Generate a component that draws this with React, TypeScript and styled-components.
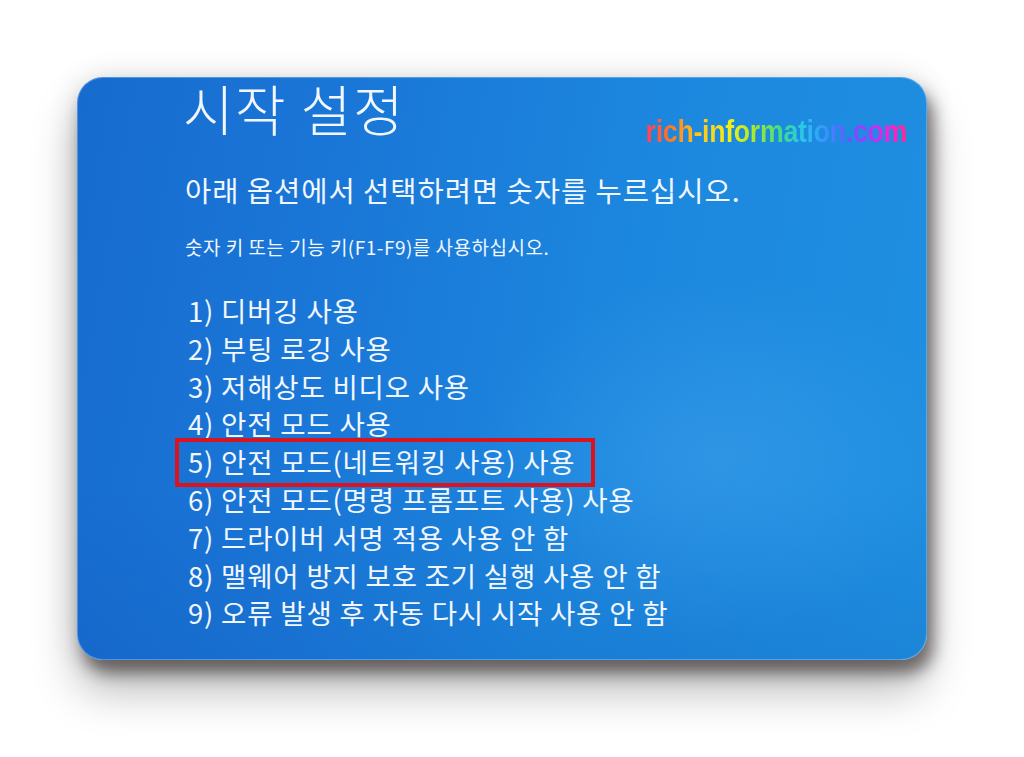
import React from "react";
import styled, { createGlobalStyle } from "styled-components";

const GlobalStyle = createGlobalStyle`
  html, body {
    margin: 0;
    padding: 0;
    background: #ffffff;
  }
  body {
    font-family: "Noto Sans CJK KR", "Noto Sans", sans-serif;
  }
`;

const Page = styled.div`
  width: 1024px;
  height: 757px;
  padding: 77px 0 0 77px;
  box-sizing: border-box;
  background: #ffffff;
  overflow: hidden;
`;

const Screen = styled.div`
  width: 850px;
  height: 583px;
  box-sizing: border-box;
  padding: 0 20px 0 106px;
  border-radius: 26px;
  color: #f2f7ff;
  background:
    radial-gradient(ellipse 340px 260px at 640px 380px, rgba(80, 170, 240, 0.35), rgba(80, 170, 240, 0) 70%),
    linear-gradient(180deg, rgba(0, 0, 0, 0) 70%, rgba(0, 40, 140, 0.1) 100%),
    linear-gradient(100deg, #176bcf 0%, #1a77d7 30%, #1c87de 62%, #1f90e1 100%);
  box-shadow:
    inset 0 0 0 1px rgba(150, 200, 255, 0.45),
    6px 13px 15px rgba(40, 30, 30, 0.55),
    0 30px 45px rgba(0, 0, 0, 0.28),
    0 0 30px rgba(0, 0, 0, 0.12);
`;

const Header = styled.div`
  display: flex;
  justify-content: space-between;
  align-items: flex-start;
`;

const Title = styled.h1`
  margin: 0;
  font-size: 55px;
  line-height: 60px;
  font-weight: 300;
  letter-spacing: 1.5px;
`;

const Watermark = styled.div`
  margin-top: 40px;
  font-family: "Liberation Sans", Arial, sans-serif;
  font-weight: 700;
  font-size: 31px;
  line-height: 30px;
  letter-spacing: -0.3px;
  transform: scaleX(0.86);
  transform-origin: right center;
  background: linear-gradient(
    90deg,
    #ff3d5a 0%,
    #ff7a22 10%,
    #ffc61a 20%,
    #f2ee1a 32%,
    #a6e82c 42%,
    #3ddc8a 52%,
    #2ac8e8 60%,
    #3a8cff 70%,
    #6a54ff 78%,
    #b233ff 86%,
    #ff20d0 94%,
    #ff2a8a 100%
  );
  -webkit-background-clip: text;
  background-clip: text;
  color: transparent;
`;

const Subtitle = styled.p`
  margin: 25px 0 0 2px;
  font-size: 28.5px;
  line-height: 36px;
  font-weight: 400;
  letter-spacing: 1px;
`;

const Hint = styled.p`
  margin: 26px 0 0 2px;
  font-size: 19px;
  line-height: 26px;
  font-weight: 400;
  letter-spacing: 0.5px;
`;

const Options = styled.ol`
  list-style: none;
  margin: 32px 0 0 5px;
  padding: 0;
  display: flex;
  flex-direction: column;
  align-items: flex-start;
`;

const Option = styled.li<{ $selected?: boolean }>`
  position: relative;
  font-size: 27.5px;
  line-height: 37.8px;
  font-weight: 400;
  letter-spacing: 0.8px;
  white-space: nowrap;

  ${(p) =>
    p.$selected
      ? `
    &::after {
      content: "";
      position: absolute;
      left: -13px;
      right: -20px;
      top: -5px;
      bottom: -6px;
      border: 4px solid #d9141f;
      pointer-events: none;
    }
  `
      : ""}
`;

const items = [
  "1) 디버깅 사용",
  "2) 부팅 로깅 사용",
  "3) 저해상도 비디오 사용",
  "4) 안전 모드 사용",
  "5) 안전 모드(네트워킹 사용) 사용",
  "6) 안전 모드(명령 프롬프트 사용) 사용",
  "7) 드라이버 서명 적용 사용 안 함",
  "8) 맬웨어 방지 보호 조기 실행 사용 안 함",
  "9) 오류 발생 후 자동 다시 시작 사용 안 함",
];

export default function App() {
  return (
    <>
      <GlobalStyle />
      <Page>
        <Screen>
          <Header>
            <Title>시작 설정</Title>
            <Watermark>rich-information.com</Watermark>
          </Header>
          <Subtitle>아래 옵션에서 선택하려면 숫자를 누르십시오.</Subtitle>
          <Hint>숫자 키 또는 기능 키(F1-F9)를 사용하십시오.</Hint>
          <Options>
            {items.map((t, i) => (
              <Option key={t} $selected={i === 4}>
                {t}
              </Option>
            ))}
          </Options>
        </Screen>
      </Page>
    </>
  );
}
